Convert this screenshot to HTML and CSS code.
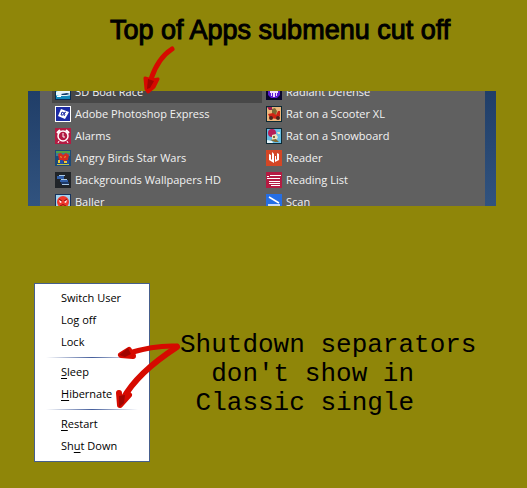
FILE: index.html
```html
<!DOCTYPE html>
<html lang="en">
<head>
<meta charset="utf-8">
<title>Start menu notes</title>
<link rel="stylesheet" href="styles.css">
</head>
<body>
<main class="board">
  <h1 class="headline">Top of Apps submenu cut off</h1>

  <section class="apps" aria-label="Apps">
    <div class="apps-panel">
      <ul class="app-list">
        <li><button class="app is-hover"><svg class="icon" viewBox="0 0 16 16"><path fill="#0b2c50" d="M0 0h16v16H0z"/><path fill="#45bde5" d="M1 1h14v14H1z"/><path fill="#e6f5fb" d="M1 8l5-3 9 1v5l-7 2-7-2z"/><path fill="#123a66" d="M6 10l6-1 3 1-4 1H7z"/><path fill="#1389ba" d="M1 12h14v3H1z"/><path fill="#fff" d="M2 12h4v1H2z"/></svg>3D Boat Race</button></li>
        <li><button class="app"><svg class="icon" viewBox="0 0 16 16"><path fill="#fff" d="M0 0h16v16H0z"/><path fill="#1c2ba4" d="M1 1h14v14H1z"/><path fill="#fff" d="M6 3l8 3-4 7-7-3z"/><path fill="none" stroke="#1c2ba4" d="M6 9l1-3 2 1-1 2zM11 6l-2 1 1 1-1 2"/></svg>Adobe Photoshop Express</button></li>
        <li><button class="app"><svg class="icon" viewBox="0 0 16 16"><path fill="#b31b42" d="M0 0h16v16H0z"/><g fill="none" stroke="#fff"><circle cx="8" cy="8" r="5" stroke-width="1.5"/><path d="M8 5v4h2M4 13l-1 2M12 13l1 2"/><path stroke-width="2" d="M2 5l3-3M11 2l3 3"/></g></svg>Alarms</button></li>
        <li><button class="app"><svg class="icon" viewBox="0 0 16 16"><path fill="#1c4a78" d="M0 0h16v16H0z"/><path fill="#54a044" d="M1 1h14v2H1z"/><path fill="#3b7d8f" d="M1 3h14v3H1z"/><path fill="#d42b20" d="M3 4l3-1 2 2 3-2 3 2-1 5-4 1-5-1z"/><path fill="#f1ca35" d="M5 6l2 1-1 1zM11 6L9 7l1 1zM3 10h2v3H3zM9 11h3v2H9z"/><path fill="#264fa5" d="M5 10h3v5H5zM12 10h2v4h-2z"/><path fill="#c3be44" d="M2 14h12v1H2z"/></svg>Angry Birds Star Wars</button></li>
        <li><button class="app"><svg class="icon" viewBox="0 0 16 16"><path fill="#202429" d="M0 0h16v16H0z"/><path fill="#315fa8" d="M2 4h7v3H2zM5 8h8v2H5z"/><path fill="#a9c9e8" d="M4 3h6v1H4zM6 7h6v1H6zM7 12h7v1H7z"/><path fill="#1e3966" d="M6 10h8v2H6z"/></svg>Backgrounds Wallpapers HD</button></li>
        <li><button class="app"><svg class="icon" viewBox="0 0 16 16"><path fill="#17335c" d="M0 0h16v16H0z"/><path fill="#a3d2ee" d="M1 1h14v14H1z"/><circle cx="8" cy="8" r="6" fill="#f0382c"/><path fill="#fff" d="M4 6l3 2-2 1zM12 6L9 8l2 1z"/><path fill="none" stroke="#8a1814" d="M4 5l3 2M12 5L9 7M5 12q3-3 6 0"/></svg>Baller</button></li>
      </ul>
      <ul class="app-list">
        <li><button class="app"><svg class="icon" viewBox="0 0 16 16"><path fill="#08062b" d="M0 0h16v16H0z"/><path fill="#5b1bd0" d="M2 1h12v10l-3 3H5l-3-3z"/><path fill="#f0dcff" d="M4 5l4-2 4 2v4h-1v3h-1V9H9v4H7V9H6v3H5V9H4z"/></svg>Radiant Defense</button></li>
        <li><button class="app"><svg class="icon" viewBox="0 0 16 16"><path fill="#0b2934" d="M0 0h16v16H0z"/><path fill="#edb77c" d="M1 1h14v14H1z"/><path fill="#9d1e4b" d="M1 1h5v3H3z"/><path fill="#7a6a34" d="M6 3l3-1 2 3-1 4-4-1z"/><path fill="#cd2414" d="M2 8l5-1 3 2 2-4h2v5l-3 3-7-1z"/><circle cx="5" cy="12" r="2" fill="#4b251b"/><circle cx="12" cy="12" r="2" fill="#4b251b"/></svg>Rat on a Scooter XL</button></li>
        <li><button class="app"><svg class="icon" viewBox="0 0 16 16"><path fill="#0b2934" d="M0 0h16v16H0z"/><path fill="#68bde2" d="M1 1h14v14H1z"/><circle cx="6" cy="5" r="4" fill="#b51e58"/><path fill="#eee3c0" d="M6 7l4-1 2 3-2 4-4-1zM11 4h3v2h-2z"/><path fill="#806b32" d="M7 8h2v2H7zM4 12l6-1 3 3H9z"/><path fill="#e7f5fb" d="M1 12l5 1 1 2H1z"/></svg>Rat on a Snowboard</button></li>
        <li><button class="app"><svg class="icon" viewBox="0 0 16 16"><path fill="#d44625" d="M0 0h16v16H0z"/><path fill="#fff" d="M3 4l2 1v4l1 1V2l2 2v9l-5-3zM9 12V6h1v4l1-1V3l2 1v6z"/></svg>Reader</button></li>
        <li><button class="app"><svg class="icon" viewBox="0 0 16 16"><path fill="#b31b42" d="M0 0h16v16H0z"/><path fill="#fff" d="M1 4h2v1H1zM4 3h11v1H4zM1 6h13v1H1zM3 9h11v1H3zM3 11h11v1H3zM5 13h9v1H5z"/></svg>Reading List</button></li>
        <li><button class="app"><svg class="icon" viewBox="0 0 16 16"><path fill="#256ee4" d="M0 0h16v16H0z"/><path fill="none" stroke="#fff" stroke-width="1.5" d="M3 3l10 6M2 11h12"/></svg>Scan</button></li>
      </ul>
    </div>
  </section>

  <section class="power">
    <div class="power-menu" role="menu">
      <button class="item" role="menuitem">Switch User</button>
      <button class="item" role="menuitem">Log off</button>
      <button class="item" role="menuitem">Lock</button>
      <hr class="separator">
      <button class="item" role="menuitem"><u>S</u>leep</button>
      <button class="item" role="menuitem"><u>H</u>ibernate</button>
      <hr class="separator">
      <button class="item" role="menuitem"><u>R</u>estart</button>
      <button class="item" role="menuitem">Sh<u>u</u>t Down</button>
    </div>
    <p class="note">Shutdown separators
  don't show in
 Classic single</p>
  </section>

  <svg class="arrow arrow-apps" viewBox="0 0 36 50" aria-hidden="true">
    <path fill="none" stroke="#d60a00" stroke-width="5" stroke-linecap="round" d="M31 4Q17 13 10 34"/>
    <path fill="#d60a00" stroke="#d60a00" stroke-width="3" stroke-linejoin="round" d="M4 33l7 2 6-1-4 8-6 5-2-3z"/>
    <path fill="#a00500" d="M7 34l6 2-4 7-3 1z"/>
  </svg>
  <svg class="arrow arrow-power" viewBox="0 0 70 72" aria-hidden="true">
    <g fill="none" stroke="#d60a00" stroke-width="6" stroke-linecap="round" stroke-linejoin="round">
      <path stroke-width="5" d="M62 7Q40 6 14 14"/>
      <path d="M62 8Q22 34 8 60"/>
      <path d="M14 11L6 16l12 1M4 54l1 12 9-10"/>
    </g>
    <path fill="#a00500" d="M4 16l9-7 3 6-6 3zM4 57l6-1-1 8-5 4z"/>
  </svg>
</main>
</body>
</html>
```
FILE: styles.css
```css
* {
  box-sizing: border-box;
}

body {
  margin: 0;
  background: #8f8609;
  font: 11px/22px "Open Sans", "Noto Sans", sans-serif;
}

.board {
  position: relative;
  padding: 12px 31px 27px 28px;
}

.headline {
  margin: 0 0 43px 82px;
  font: 27px/36px "Liberation Sans", sans-serif;
  -webkit-text-stroke: 1px #000;
  white-space: nowrap;
}

.apps {
  height: 115px;
  padding: 0 11px 0 12px;
  overflow: hidden;
  background: linear-gradient(#203e68, #31537f);
}

.apps-panel {
  display: grid;
  grid-template-columns: 210px 1fr;
  gap: 1px;
  height: 100%;
  padding-left: 12px;
  background: #606060;
}

.app-list {
  margin: -10px 0 0;
  padding: 0;
  list-style: none;
}

button {
  border: 0;
  background: none;
  font: inherit;
  text-align: left;
}

.app {
  display: flex;
  align-items: center;
  gap: 4px;
  width: 100%;
  height: 22px;
  padding: 0 3px;
  color: #f2f2f2;
  white-space: nowrap;
}

.is-hover {
  background: #484848;
}

.icon {
  flex: none;
  width: 16px;
  height: 16px;
}

.power {
  display: flex;
  align-items: flex-start;
  gap: 30px;
  margin: 77px 0 0 6px;
}

.power-menu {
  flex: none;
  width: 116px;
  padding: 3px 11px 4px;
  border: 1px solid #465f8c;
  background: #fff;
}

.item {
  display: block;
  width: 100%;
  height: 22px;
  padding: 0 0 0 15px;
  color: #000;
}

.item u {
  text-underline-offset: 2px;
}

.separator {
  height: 1px;
  margin: 4px 0 3px;
  border: 0;
  background: linear-gradient(90deg, #fff, #465f9c 50%, #fff);
}

.note {
  margin: 48px 0 0;
  font: 26px/29px "Liberation Mono", monospace;
  white-space: pre;
}

.arrow {
  position: absolute;
}

.arrow-apps {
  top: 45px;
  left: 141px;
  width: 36px;
  height: 50px;
}

.arrow-power {
  top: 339px;
  left: 115px;
  width: 70px;
  height: 72px;
}
```
